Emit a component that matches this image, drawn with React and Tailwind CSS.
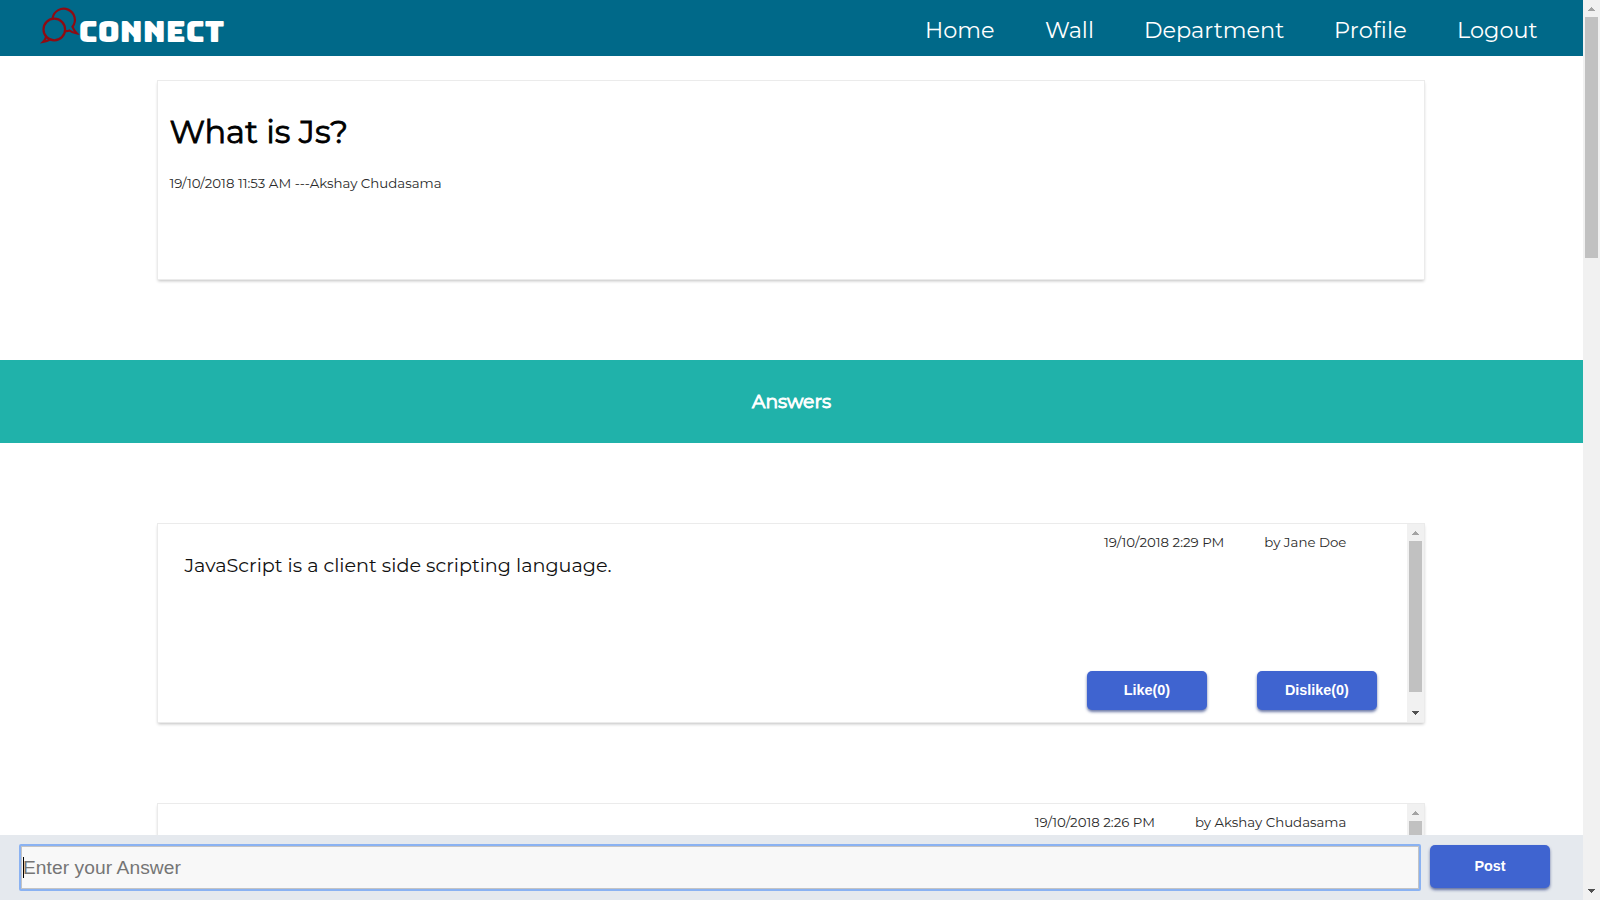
const sans = "font-['Montserrat','Inter',sans-serif]";

function Arrow({ up = false, color }) {
  return (
    <svg width="17" height="17" viewBox="0 0 17 17" className="block shrink-0" shapeRendering="crispEdges">
      <path d={up ? "M5 11h7v-1h-1v-1h-1v-1h-1v-1h-1v1h-1v1h-1v1h-1z" : "M5 6h7v1h-1v1h-1v1h-1v1h-1v-1h-1v-1h-1v-1h-1z"} fill={color} />
    </svg>
  );
}

function Logo() {
  return (
    <svg width="200" height="56" viewBox="0 0 200 56" className="block shrink-0">
      <g fill="none" stroke="#8f0b12" strokeWidth="2.2" strokeLinejoin="miter">
        <circle cx="18.3" cy="29.5" r="10.8" />
        <path d="M16.600 18.200A11.200 11.200 0 1 1 36.500 26.800Q38 30.500 41 33.500Q36.500 33 33.500 30.500Q31 31.500 28.500 31" />
        <path d="M10.200 36.500Q9.500 39.500 7 42Q11 41.500 14.500 39.400" />
      </g>
      <text x="42.500" y="41.500" fill="#fff" fontFamily="Bungee, 'Russo One', Inter, sans-serif" fontWeight="400" fontSize="28.5" textLength="146" lengthAdjust="spacingAndGlyphs">CONNECT</text>
    </svg>
  );
}

const cardShadow = "shadow-[0_0_0_1px_#ebebeb,0_2px_3px_rgba(0,0,0,0.25)]";
const button = "flex w-[120px] items-center justify-center rounded-[5px] bg-[#3f64d0] font-['Liberation_Sans',Arial,sans-serif] text-[14.4px] font-bold text-white shadow-[0_2px_3px_rgba(30,50,120,0.65)]";

function Answer({ text, date, author }) {
  return (
    <article className={`ml-[158.4px] flex h-[198px] w-[1266px] shrink-0 bg-white ${cardShadow}`}>
      <div className="flex flex-1 flex-col">
        <div className="flex h-[29px] justify-end pr-[61px] pt-[10px] text-[13.33px] leading-[16px] text-[#2a2a2a]">
          <span className="mr-[40px] whitespace-nowrap">{date}</span>
          <span className="whitespace-nowrap">{author}</span>
        </div>
        {text && (
          <>
            <p className="h-[118px] pl-[26px] text-[19.2px] leading-[24px] text-[#111]"><span className="whitespace-nowrap">{text}</span></p>
            <div className="flex justify-end gap-[50px] pr-[30px]">
              <button className={`h-[39px] pr-[1px] ${button}`}>Like(0)</button>
              <button className={`h-[39px] pr-[1px] ${button}`}>Dislike(0)</button>
            </div>
          </>
        )}
      </div>
      <div className="flex w-[17px] flex-col bg-[#f1f1f1]">
        <Arrow up color="#a3a3a3" />
        <div className="mx-[2px] h-[151px] bg-[#c1c1c1]" />
        <div className="flex-1" />
        <Arrow color="#505050" />
      </div>
    </article>
  );
}

export default function App() {
  return (
    <div className={`flex h-[900px] w-[1600px] overflow-hidden bg-white ${sans}`}>
      <div className="flex w-[1583px] flex-col">
        <header className="flex h-[56px] shrink-0 bg-[#006989] pl-[36px]">
          <Logo />
          <nav className="ml-[689px] flex whitespace-nowrap pt-[15px] text-[22.4px] leading-[30px] text-white">
            <a className="w-[120px]">Home</a>
            <a className="w-[99px]">Wall</a>
            <a className="w-[190px]">Department</a>
            <a className="w-[123px] tracking-[0.2px]">Profile</a>
            <a>Logout</a>
          </nav>
        </header>
        <main className="flex min-h-0 flex-1 flex-col overflow-hidden">
          <section className={`ml-[158.4px] mt-[25px] h-[198px] w-[1266px] shrink-0 bg-white pl-[11px] pt-[31px] ${cardShadow}`}>
            <h1 className="text-[32px] font-normal leading-[40px] text-black [-webkit-text-stroke:0.8px_black]">What is Js?</h1>
            <p className="mt-[23px] text-[13.33px] leading-[16px] text-[#2a2a2a]">19/10/2018 11:53 AM ---Akshay Chudasama</p>
          </section>
          <h2 className="mt-[81px] flex h-[83px] shrink-0 items-center justify-center bg-[#20b2aa] pt-px text-[18.72px] font-normal text-white [-webkit-text-stroke:0.9px_white]">Answers</h2>
          <div className="mt-[81px] flex flex-col gap-[82px]">
            <Answer text="JavaScript is a client side scripting language." date="19/10/2018 2:29 PM" author="by Jane Doe" />
            <Answer text="" date="19/10/2018 2:26 PM" author="by Akshay Chudasama" />
          </div>
        </main>
        <footer className="flex h-[65px] shrink-0 bg-[#e5e9ee] pl-[19px] pt-[10px]">
          <div className="mr-[9px] mt-[-1px] flex h-[47px] w-[1402px] items-center rounded-[2px] border-2 border-[#8ab2f2] bg-[#f8f8f8] font-['Liberation_Sans',Arial,sans-serif] text-[19.2px] text-[#757575] shadow-[inset_0_0_0_1px_#c4c4c4]">
            <span className="ml-[2px] mr-[-1px] h-[21px] w-px bg-black" />
            <span className="pt-[2px] tracking-[0.07px]">Enter your Answer</span>
          </div>
          <button className={`h-[43px] ${button}`}>Post</button>
        </footer>
      </div>
      <div className="flex w-[17px] flex-col bg-[#f1f1f1]">
        <Arrow up color="#a3a3a3" />
        <div className="mx-[2px] h-[241px] bg-[#c1c1c1]" />
        <div className="flex-1" />
        <Arrow color="#505050" />
      </div>
    </div>
  );
}
